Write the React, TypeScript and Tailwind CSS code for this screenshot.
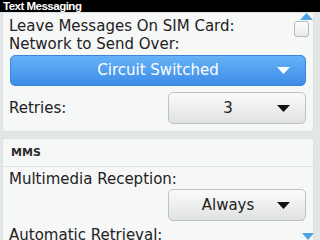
const font = { fontFamily: '"DejaVu Sans", sans-serif' }

function Caret({ color }: { color: string }) {
  return (
    <svg width="13" height="7" viewBox="0 0 13 7" className="shrink-0">
      <path d="M0 0 H13 L6.5 7 Z" fill={color} />
    </svg>
  )
}

function Picker({ label }: { label: string }) {
  return (
    <div className="w-[138px] h-[32px] rounded-[5px] bg-gradient-to-b from-[#fbfbfb] to-[#e0e2e2] border border-[#bfc3c4] flex items-center relative">
      <span className="flex-1 text-center text-[15px] text-[#222] pr-[18px]">{label}</span>
      <div className="absolute right-[15px] top-[12px]"><Caret color="#111111" /></div>
    </div>
  )
}

export default function App() {
  return (
    <div className="w-[320px] h-[240px] overflow-hidden bg-[#e3e6e7] relative" style={font}>
      {/* Title bar */}
      <div className="h-[12px] bg-black flex items-center px-[3px]">
        <span
          className="text-white text-[11.5px] font-bold leading-none tracking-[-0.5px] mt-[1px]"
          style={{ fontFamily: '"Liberation Sans", sans-serif' }}
        >
          Text Messaging
        </span>
      </div>

      {/* Panel 1 */}
      <div className="ml-[2px] mr-[6px] h-[120px] bg-[#f6f7f7] border border-[#dde1e2] rounded-b-[3px] flex flex-col">
        <div className="flex items-center justify-between pl-[6px] pr-[4px] h-[18px] mt-[4px]">
          <span className="text-[15px] text-[#222]">Leave Messages On SIM Card:</span>
          <div className="w-[15px] h-[16px] mt-[6px] rounded-[3px] border border-[#b5b9ba] bg-gradient-to-b from-white to-[#e7e9ea]" />
        </div>
        <div className="pl-[6px] h-[19px] flex items-center">
          <span className="text-[15px] text-[#222]">Network to Send Over:</span>
        </div>
        <div className="px-[7px] mt-[1px]">
          <div className="h-[31px] rounded-[5px] bg-gradient-to-b from-[#66b2f7] to-[#3d8ce8] border border-[#3a86d8] flex items-center relative">
            <span className="flex-1 text-center text-white text-[15px]">Circuit Switched</span>
            <div className="absolute right-[15px] top-[11px]"><Caret color="#ffffff" /></div>
          </div>
        </div>
        <div className="flex items-center justify-between pl-[6px] pr-[7px] mt-[6px]">
          <span className="text-[15px] text-[#222]">Retries:</span>
          <Picker label="3" />
        </div>
      </div>

      {/* Panel 2 */}
      <div className="ml-[2px] mr-[6px] mt-[6px] h-[110px] bg-[#f6f7f7] border border-[#dde1e2] rounded-t-[3px] flex flex-col">
        <div className="h-[28px] flex items-center pl-[8px] border-b border-[#dfe2e3]">
          <span className="text-[11px] font-bold text-[#2a2a2a] mt-[1px]">MMS</span>
        </div>
        <div className="pl-[6px] h-[20px] mt-[2px] flex items-center">
          <span className="text-[15px] text-[#222]">Multimedia Reception:</span>
        </div>
        <div className="flex justify-end pr-[7px]">
          <Picker label="Always" />
        </div>
        <div className="pl-[6px] mt-[3px] flex items-center">
          <span className="text-[15px] text-[#222]">Automatic Retrieval:</span>
        </div>
      </div>

      {/* Scroll indicators */}
      <svg width="13" height="7" viewBox="0 0 13 7" className="absolute left-[300px] top-[13px]">
        <path d="M0 7 L6.5 0 L13 7 Z" fill="#4ba3df" />
      </svg>
      <svg width="12" height="7" viewBox="0 0 12 7" className="absolute left-[302px] top-[233px]">
        <path d="M0 0 H12 L6 7 Z" fill="#4ba3df" />
      </svg>
    </div>
  )
}
